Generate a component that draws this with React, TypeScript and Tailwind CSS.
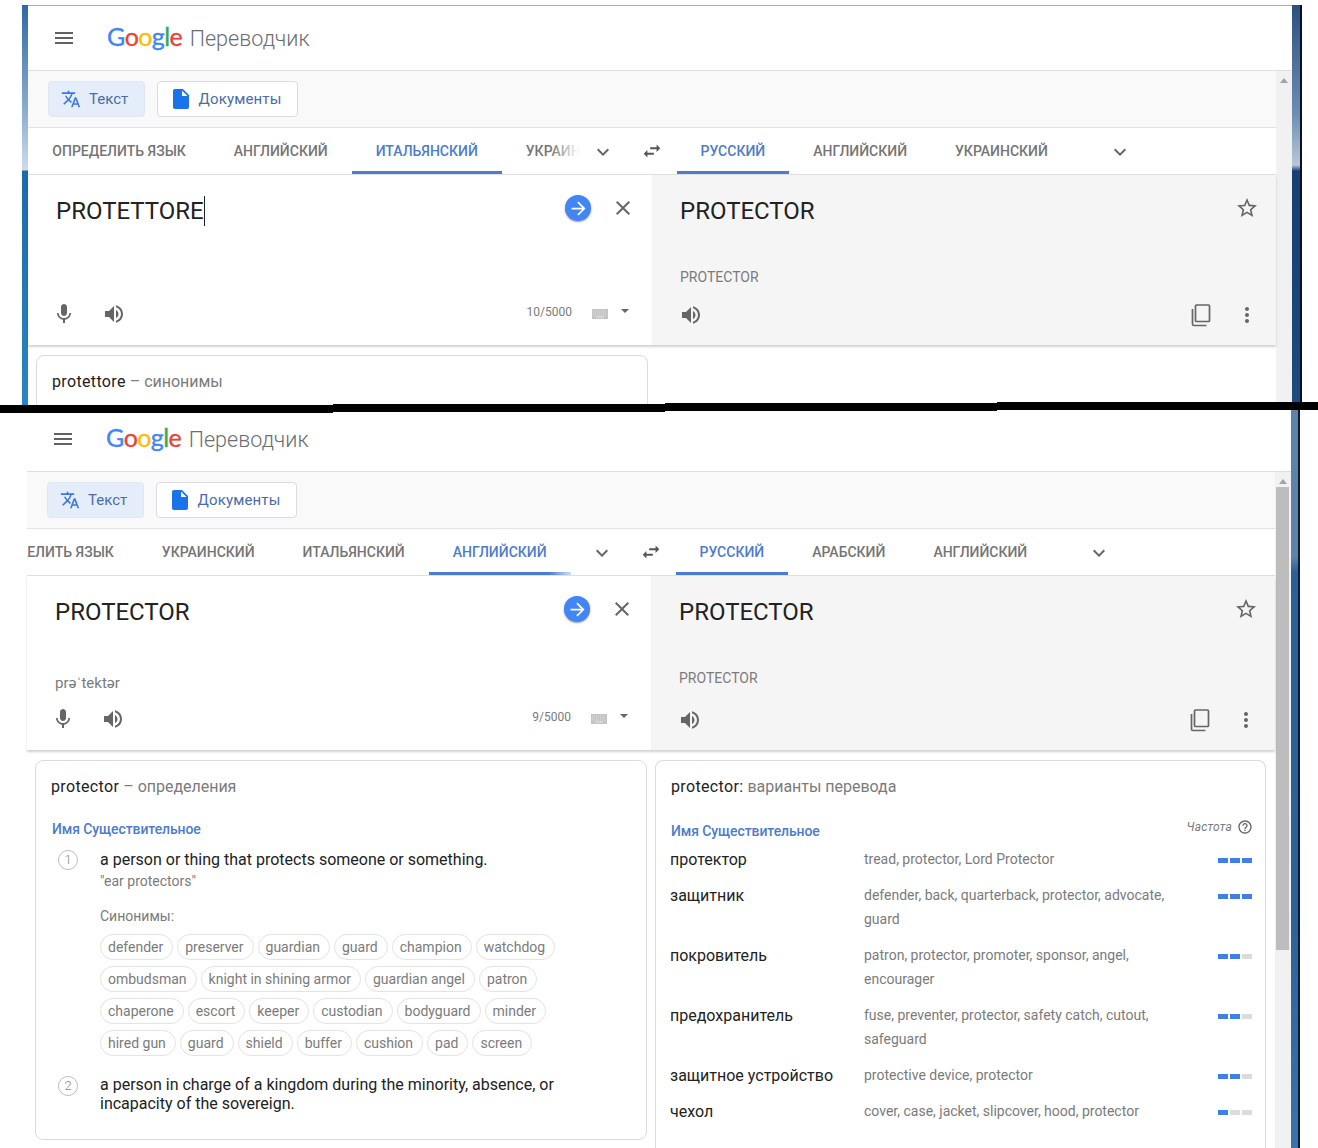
import React from "react";

const P = {
  menu: "M3 18h18v-2H3v2zm0-5h18v-2H3v2zm0-7v2h18V6H3z",
  translate: "M12.87 15.07l-2.54-2.51.03-.03c1.74-1.94 2.98-4.17 3.71-6.53H17V4h-7V2H8v2H1v1.99h11.17C11.5 7.92 10.44 9.75 9 11.35 8.07 10.32 7.3 9.19 6.69 8h-2c.73 1.63 1.73 3.17 2.98 4.56l-5.09 5.02L4 19l5-5 3.11 3.11.76-2.04zM18.5 10h-2L12 22h2l1.12-3h4.75L21 22h2l-4.5-12zm-2.62 7l1.62-4.33L19.12 17h-3.24z",
  file: "M6 2c-1.1 0-1.99.9-1.99 2L4 20c0 1.1.89 2 1.99 2H18c1.1 0 2-.9 2-2V8l-6-6H6zm7 7V3.5L18.5 9H13z",
  more: "M16.59 8.59L12 13.17 7.41 8.59 6 10l6 6 6-6z",
  swap: "M6.99 11L3 15l3.99 4v-3H14v-2H6.99v-3zM21 9l-3.99-4v3H10v2h7.01v3L21 9z",
  close: "M19 6.41L17.59 5 12 10.59 6.41 5 5 6.41 10.59 12 5 17.59 6.41 19 12 13.41 17.59 19 19 17.59 13.41 12z",
  arrow: "M12 4l-1.41 1.41L16.17 11H4v2h12.17l-5.58 5.59L12 20l8-8z",
  star: "M22 9.24l-7.19-.62L12 2 9.19 8.63 2 9.24l5.46 4.73L5.82 21 12 17.27 18.18 21l-1.63-7.03L22 9.24zM12 15.4l-3.76 2.27 1-4.28-3.32-2.88 4.38-.38L12 6.1l1.71 4.04 4.38.38-3.32 2.88 1 4.28L12 15.4z",
  mic: "M12 14c1.66 0 2.99-1.34 2.99-3L15 5c0-1.66-1.34-3-3-3S9 3.34 9 5v6c0 1.66 1.34 3 3 3zm5.3-3c0 3-2.54 5.1-5.3 5.1S6.7 14 6.7 11H5c0 3.41 2.72 6.23 6 6.72V21h2v-3.28c3.28-.48 6-3.3 6-6.72h-1.7z",
  vol: "M3 9v6h4l5 5V4L7 9H3zm13.5 3c0-1.77-1.02-3.29-2.5-4.03v8.05c1.48-.73 2.5-2.25 2.5-4.02zM14 3.23v2.06c2.89.86 5 3.54 5 6.71s-2.11 5.85-5 6.71v2.06c4.01-.91 7-4.49 7-8.77s-2.99-7.86-7-8.77z",
  dots: "M12 8c1.1 0 2-.9 2-2s-.9-2-2-2-2 .9-2 2 .9 2 2 2zm0 2c-1.1 0-2 .9-2 2s.9 2 2 2 2-.9 2-2-.9-2-2-2zm0 6c-1.1 0-2 .9-2 2s.9 2 2 2 2-.9 2-2-.9-2-2-2z",
  help: "M11 18h2v-2h-2v2zm1-16C6.48 2 2 6.48 2 12s4.48 10 10 10 10-4.48 10-10S17.52 2 12 2zm0 18c-4.41 0-8-3.59-8-8s3.59-8 8-8 8 3.59 8 8-3.59 8-8 8zm0-14c-2.21 0-4 1.79-4 4h2c0-1.1.9-2 2-2s2 .9 2 2c0 2-3 1.75-3 5h2c0-2.25 3-2.5 3-5 0-2.21-1.79-4-4-4z",
};

function Icon({ d, className }: { d: string; className: string }) {
  return (
    <svg viewBox="0 0 24 24" className={className} fill="currentColor">
      <path d={d} />
    </svg>
  );
}

function CopyIcon() {
  return (
    <svg viewBox="0 0 24 24" className="w-[24px] h-[24px] ml-auto text-[#666]" fill="none" stroke="currentColor" strokeWidth="1.7">
      <rect x="8.5" y="2" width="14" height="16.5" rx="1" />
      <path d="M5.5 6v15a1.5 1.5 0 0 0 1.5 1.5h12.5" />
    </svg>
  );
}

function Keyboard() {
  return (
    <svg viewBox="0 0 16 10" className="w-[16px] h-[10px] shrink-0">
      <rect width="16" height="10" fill="#c4c4c4" />
      <path d="M1 2h14M1 4h14M1 6h14" stroke="#e6e6e6" strokeWidth="0.7" strokeDasharray="1 1" />
      <rect x="4" y="7.5" width="8" height="1" fill="#e6e6e6" />
    </svg>
  );
}

function Header() {
  return (
    <div className="h-[65px] bg-white border-b border-[#dfdfdf] flex items-center pl-[24px]">
      <Icon d={P.menu} className="w-[24px] h-[24px] text-[#5f6368]" />
      <div className="ml-[31px] flex items-baseline text-[25px] leading-[30px] -mt-[1px] [font-family:Lato,sans-serif] tracking-[-0.6px] [-webkit-text-stroke:0.35px]">
        <span className="text-[#4285f4]">G</span>
        <span className="text-[#ea4335]">o</span>
        <span className="text-[#fbbc05]">o</span>
        <span className="text-[#4285f4]">g</span>
        <span className="text-[#34a853]">l</span>
        <span className="text-[#ea4335]">e</span>
        <span className="ml-[7.5px] text-[21.5px] text-[#6b6e72] [font-family:Roboto,sans-serif] font-light tracking-[0.05px] [-webkit-text-stroke:0px]">Переводчик</span>
      </div>
    </div>
  );
}

function Toolbar() {
  return (
    <div className="h-[57px] bg-[#f9f9f9] border-b border-[#e3e3e3] flex items-start pt-[10px] pl-[20px] gap-[12px]">
      <div className="h-[36px] w-[97px] rounded-[4px] bg-[#e4edf9] border border-[#dfe7f2] flex items-center pl-[12px] gap-[8px] text-[15px] text-[#4a6da7]">
        <Icon d={P.translate} className="w-[20px] h-[20px] text-[#3d78d8]" />
        <span>Текст</span>
      </div>
      <div className="h-[36px] w-[141px] rounded-[4px] bg-white border border-[#dadce0] flex items-center pl-[11px] gap-[5.5px] text-[15px] tracking-[0.15px] text-[#4a6da7]">
        <Icon d={P.file} className="w-[24px] h-[24px] text-[#1a73e8]" />
        <span>Документы</span>
      </div>
    </div>
  );
}

function Tab({ label, active }: { label: string; active?: boolean }) {
  return (
    <div
      className={
        "h-[46px] px-[24px] shrink-0 flex items-center pt-[3px] text-[14px] font-medium whitespace-nowrap uppercase border-b-[3px] " +
        (active ? "text-[#4d7cc9] border-[#4a7dd2]" : "text-[#757575] border-transparent")
      }
    >
      {label}
    </div>
  );
}

function LangBar({ left, right, active, scroll }: { left: string[]; right: string[]; active: string; scroll: boolean }) {
  return (
    <div className="h-[47px] bg-white border-b border-[#dfdfdf] flex items-start">
      <div className="relative w-[552px] h-[46px] overflow-hidden shrink-0">
        <div className={"flex pl-[0.3px] " + (scroll ? "-ml-[71px]" : "")}>
          {left.map((l) => (
            <Tab key={l} label={l} active={l === active} />
          ))}
        </div>
        <div className="absolute right-0 top-0 bottom-0 w-[30px] bg-gradient-to-r from-white/0 to-white" />
      </div>
      <div className="w-[46px] h-[46px] pt-[1px] flex items-center justify-center">
        <Icon d={P.more} className="w-[24px] h-[24px] text-[#666]" />
      </div>
      <div className="w-[50px] pl-[2px] h-[46px] flex items-center justify-center">
        <Icon d={P.swap} className="w-[22px] h-[22px] text-[#555]" />
      </div>
      <div className="flex pl-[0.5px]">
        {right.map((l, i) => (
          <Tab key={l} label={l} active={i === 0} />
        ))}
      </div>
      <div className="ml-[24px] w-[48px] h-[46px] pt-[1px] flex items-center justify-center">
        <Icon d={P.more} className="w-[24px] h-[24px] text-[#666]" />
      </div>
    </div>
  );
}

function Panels({ text, cursor, count, phon, height, leftPad, rightPad }: { text: string; cursor?: boolean; count: string; phon?: string; height: string; leftPad: string; rightPad: string }) {
  return (
    <div className={"flex relative z-10 shadow-[0_2px_2px_rgba(0,0,0,0.18)] " + height}>
      <div className={"w-[624px] bg-white flex flex-col pl-[24px] " + leftPad}>
        <div className="flex items-start pt-[18px] pl-[4px] pr-[17px]">
          <div className="flex-1 pt-[1px] text-[24px] leading-[34px] text-[#222] flex items-center">
            <span>{text}</span>
            {cursor ? <span className="w-[1px] h-[30px] bg-[#222] ml-[0.5px]" /> : null}
          </div>
          <div className="w-[26px] h-[26px] mt-[2px] rounded-full bg-[#4285f4] shadow-[0_1px_2px_rgba(0,0,0,0.4)] flex items-center justify-center">
            <Icon d={P.arrow} className="w-[21px] h-[21px] text-white" />
          </div>
          <Icon d={P.close} className="w-[24px] h-[24px] ml-[20px] mt-[3px] text-[#666]" />
        </div>
        <div className="mt-auto">
          {phon ? <div className="pl-[4px] mb-[14px] text-[15px] leading-[20px] text-[#7b7b7b]">{phon}</div> : null}
          <div className="flex items-center h-[24px] text-[#666]">
            <Icon d={P.mic} className="w-[24px] h-[24px]" />
            <Icon d={P.vol} className="w-[24px] h-[24px] ml-[26px]" />
            <div className="ml-auto flex items-center pr-[23px] -mt-[5px]">
              <span className="text-[12px] text-[#7b7b7b]">{count}</span>
              <span className="ml-[20px] mt-[5px]"><Keyboard /></span>
              <span className="ml-[13px] mb-[2px] w-0 h-0 border-x-[4px] border-x-transparent border-t-[4px] border-t-[#666]" />
            </div>
          </div>
        </div>
      </div>
      <div className={"flex-1 bg-[#f5f5f5] flex flex-col pl-[28px] pr-[17px] " + rightPad}>
        <div className="flex items-start pt-[18px]">
          <div className="flex-1 pt-[1px] text-[24px] leading-[34px] text-[#222]">PROTECTOR</div>
          <Icon d={P.star} className="w-[24px] h-[24px] mt-[3px] text-[#666]" />
        </div>
        <div className="mt-[39px] text-[14px] leading-[20px] text-[#7b7b7b]">PROTECTOR</div>
        <div className="mt-auto flex items-center h-[24px] text-[#666]">
          <Icon d={P.vol} className="w-[24px] h-[24px] -ml-[1px]" />
          <CopyIcon />
          <Icon d={P.dots} className="w-[24px] h-[24px] ml-[24px]" />
        </div>
      </div>
    </div>
  );
}

function Card({ title, tail, className, children }: { title: string; tail: string; className: string; children?: React.ReactNode }) {
  return (
    <div className={"bg-white border border-[#dadce0] pr-[16px] pt-[16px] " + className}>
      <div className="text-[16px] leading-[20px] tracking-[0.35px] text-[#222]">
        {title}
        <span className="text-[#7b7b7b] tracking-[-0.02px]">{tail}</span>
      </div>
      {children}
    </div>
  );
}

const chips = [
  "defender", "preserver", "guardian", "guard", "champion", "watchdog",
  "ombudsman", "knight in shining armor", "guardian angel", "patron",
  "chaperone", "escort", "keeper", "custodian", "bodyguard", "minder",
  "hired gun", "guard", "shield", "buffer", "cushion", "pad", "screen",
];

const rows: [string, string, number][] = [
  ["протектор", "tread, protector, Lord Protector", 3],
  ["защитник", "defender, back, quarterback, protector, advocate, guard", 3],
  ["покровитель", "patron, protector, promoter, sponsor, angel, encourager", 2],
  ["предохранитель", "fuse, preventer, protector, safety catch, cutout, safeguard", 2],
  ["защитное устройство", "protective device, protector", 2],
  ["чехол", "cover, case, jacket, slipcover, hood, protector", 1],
];

function NumCircle({ n }: { n: number }) {
  return (
    <div className="w-[20px] h-[20px] shrink-0 rounded-full border border-[#bdbdbd] flex items-center justify-center text-[13px] font-light text-[#888]">
      {n}
    </div>
  );
}

function Definitions() {
  return (
    <Card title="protector" tail=" – определения" className="w-[612px] h-[380px] rounded-[8px] pl-[15px]">
      <div className="ml-[1px] mt-[22px] text-[14px] leading-[20px] font-medium text-[#4d7cc9] -tracking-[0.1px]">Имя Существительное</div>
      <div className="flex mt-[11px] pl-[7px]">
        <NumCircle n={1} />
        <div className="ml-[22px] w-[480px]">
          <div className="text-[16px] leading-[20px] text-[#222]">a person or thing that protects someone or something.</div>
          <div className="text-[14px] leading-[20px] text-[#7b7b7b] mt-[1px]">"ear protectors"</div>
          <div className="text-[14px] leading-[20px] text-[#7b7b7b] mt-[15px]">Синонимы:</div>
          <div className="flex flex-wrap gap-x-[4px] gap-y-[6px] mt-[8px] w-[470px]">
            {chips.map((c, i) => (
              <span key={i} className="h-[26px] pl-[7px] pr-[9px] rounded-full border border-[#e3e3e3] flex items-center text-[14px] text-[#7b7b7b]">
                {c}
              </span>
            ))}
          </div>
        </div>
      </div>
      <div className="flex mt-[19px] pl-[7px]">
        <div className="mt-[1px]"><NumCircle n={2} /></div>
        <div className="ml-[22px] w-[480px] text-[16px] leading-[19px] text-[#222]">
          a person in charge of a kingdom during the minority, absence, or incapacity of the sovereign.
        </div>
      </div>
    </Card>
  );
}

function Bars({ n }: { n: number }) {
  return (
    <div className="flex gap-[2px] pt-[10px] ml-auto">
      {[0, 1, 2].map((i) => (
        <span key={i} className={"w-[10px] h-[5px] " + (i < n ? "bg-[#3f7fe6]" : "bg-[#dcdcdc]")} />
      ))}
    </div>
  );
}

function Variants() {
  return (
    <Card title="protector:" tail=" варианты перевода" className="w-[611px] h-[400px] rounded-t-[8px] border-b-0 pl-[15px]">
      <div className="mt-[24px] flex items-start">
        <div className="text-[14px] leading-[20px] font-medium text-[#4d7cc9] -tracking-[0.1px]">Имя Существительное</div>
        <div className="ml-auto flex items-center gap-[5px] -mt-[3px] text-[12px] italic text-[#7b7b7b] tracking-[0.2px] mr-[-4px]">
          <span>Частота</span>
          <Icon d={P.help} className="w-[16px] h-[16px] text-[#666]" />
        </div>
      </div>
      <div className="mt-[7px] -ml-[1px] -mr-[3px]">
        {rows.map(([t, v, n]) => (
          <div key={t} className="flex items-start pb-[12px]">
            <div className="w-[194px] text-[16px] leading-[24px] text-[#222] shrink-0">{t}</div>
            <div className="w-[310px] -mt-[1px] mb-[1px] text-[14px] leading-[24px] text-[#7b7b7b]">{v}</div>
            <Bars n={n} />
          </div>
        ))}
      </div>
    </Card>
  );
}

function ScrollArrow() {
  return <div className="mx-auto w-0 h-0 border-x-[4px] border-x-transparent border-b-[5px] border-b-[#a3a3a3]" />;
}

export default function App() {
  return (
    <div className="relative w-[1318px] h-[1148px] bg-white overflow-hidden [font-family:Roboto,sans-serif]">
      {/* upper capture */}
      <div className="h-[405px] pt-[5px] flex overflow-hidden">
        <div className="w-[22px] shrink-0" />
        <div className="w-[6px] shrink-0 bg-[linear-gradient(to_bottom,#2f69a6_0px,#8fb0d0_110px,#cddcea_165px,#1d6aaa_166px,#2a86c0_400px)]" />
        <div className="w-[1264px] shrink-0 border-t border-[#aaa]">
          <Header />
          <div className="flex">
            <div className="w-[1248px] shrink-0">
              <Toolbar />
              <LangBar
                left={["Определить язык", "Английский", "Итальянский", "Украинский"]}
                right={["Русский", "Английский", "Украинский"]}
                active="Итальянский"
                scroll={false}
              />
              <Panels text="PROTETTORE" cursor count="10/5000" height="h-[170px]" leftPad="pb-[19px]" rightPad="pb-[18px]" />
              <div className="pl-[8px] pt-[10px]">
                <Card title="protettore" tail=" – синонимы" className="w-[612px] h-[100px] rounded-[8px] pl-[15px]" />
              </div>
            </div>
            <div className="w-[16px] h-[400px] bg-[#f1f1f1] pt-[7px]"><ScrollArrow /></div>
          </div>
        </div>
        <div className="w-[8px] shrink-0 bg-[linear-gradient(to_bottom,#2c4f80_0px,#6d8fb4_110px,#b9c8d8_160px,#173f73_166px,#1d4a80_400px)]" />
        <div className="w-[2px] shrink-0 bg-[#0a1020]" />
      </div>

      {/* lower capture */}
      <div className="h-[743px] pt-[2px] flex overflow-hidden">
        <div className="w-[27px] shrink-0" />
        <div className="w-[1264px] shrink-0">
          <Header />
          <div className="flex">
            <div className="w-[1248px] shrink-0">
              <Toolbar />
              <LangBar
                left={["Определить язык", "Украинский", "Итальянский", "Английский"]}
                right={["Русский", "Арабский", "Английский"]}
                active="Английский"
                scroll
              />
              <Panels text="PROTECTOR" count="9/5000" phon="prəˈtektər" height="h-[174px]" leftPad="pb-[19px]" rightPad="pb-[18px]" />
              <div className="flex pl-[8px] pt-[10px] gap-[8px]">
                <Definitions />
                <Variants />
              </div>
            </div>
            <div className="w-[16px] h-[676px] bg-[#f1f1f1] flex flex-col pt-[7px]">
              <ScrollArrow />
              <div className="w-[13px] h-[463px] mt-[3px] ml-[1px] bg-[#bdbdbd]" />
            </div>
          </div>
        </div>
        <div className="w-[7px] shrink-0 bg-[linear-gradient(to_bottom,#5f82a8_0px,#5f82a8_150px,#2c5f97_165px,#2a6298_500px,#3a74ab_743px)]" />
        <div className="w-[2px] shrink-0 bg-[#0a1a38]" />
      </div>

      {/* black seam between the two captures */}
      <div className="absolute left-0 right-0 top-[402px] flex">
        <div className="w-[333px] h-[8px] mt-[3px] bg-black" />
        <div className="w-[332px] h-[8px] mt-[2px] bg-black" />
        <div className="w-[332px] h-[8px] mt-[1px] bg-black" />
        <div className="flex-1 h-[8px] bg-black" />
      </div>
    </div>
  );
}
